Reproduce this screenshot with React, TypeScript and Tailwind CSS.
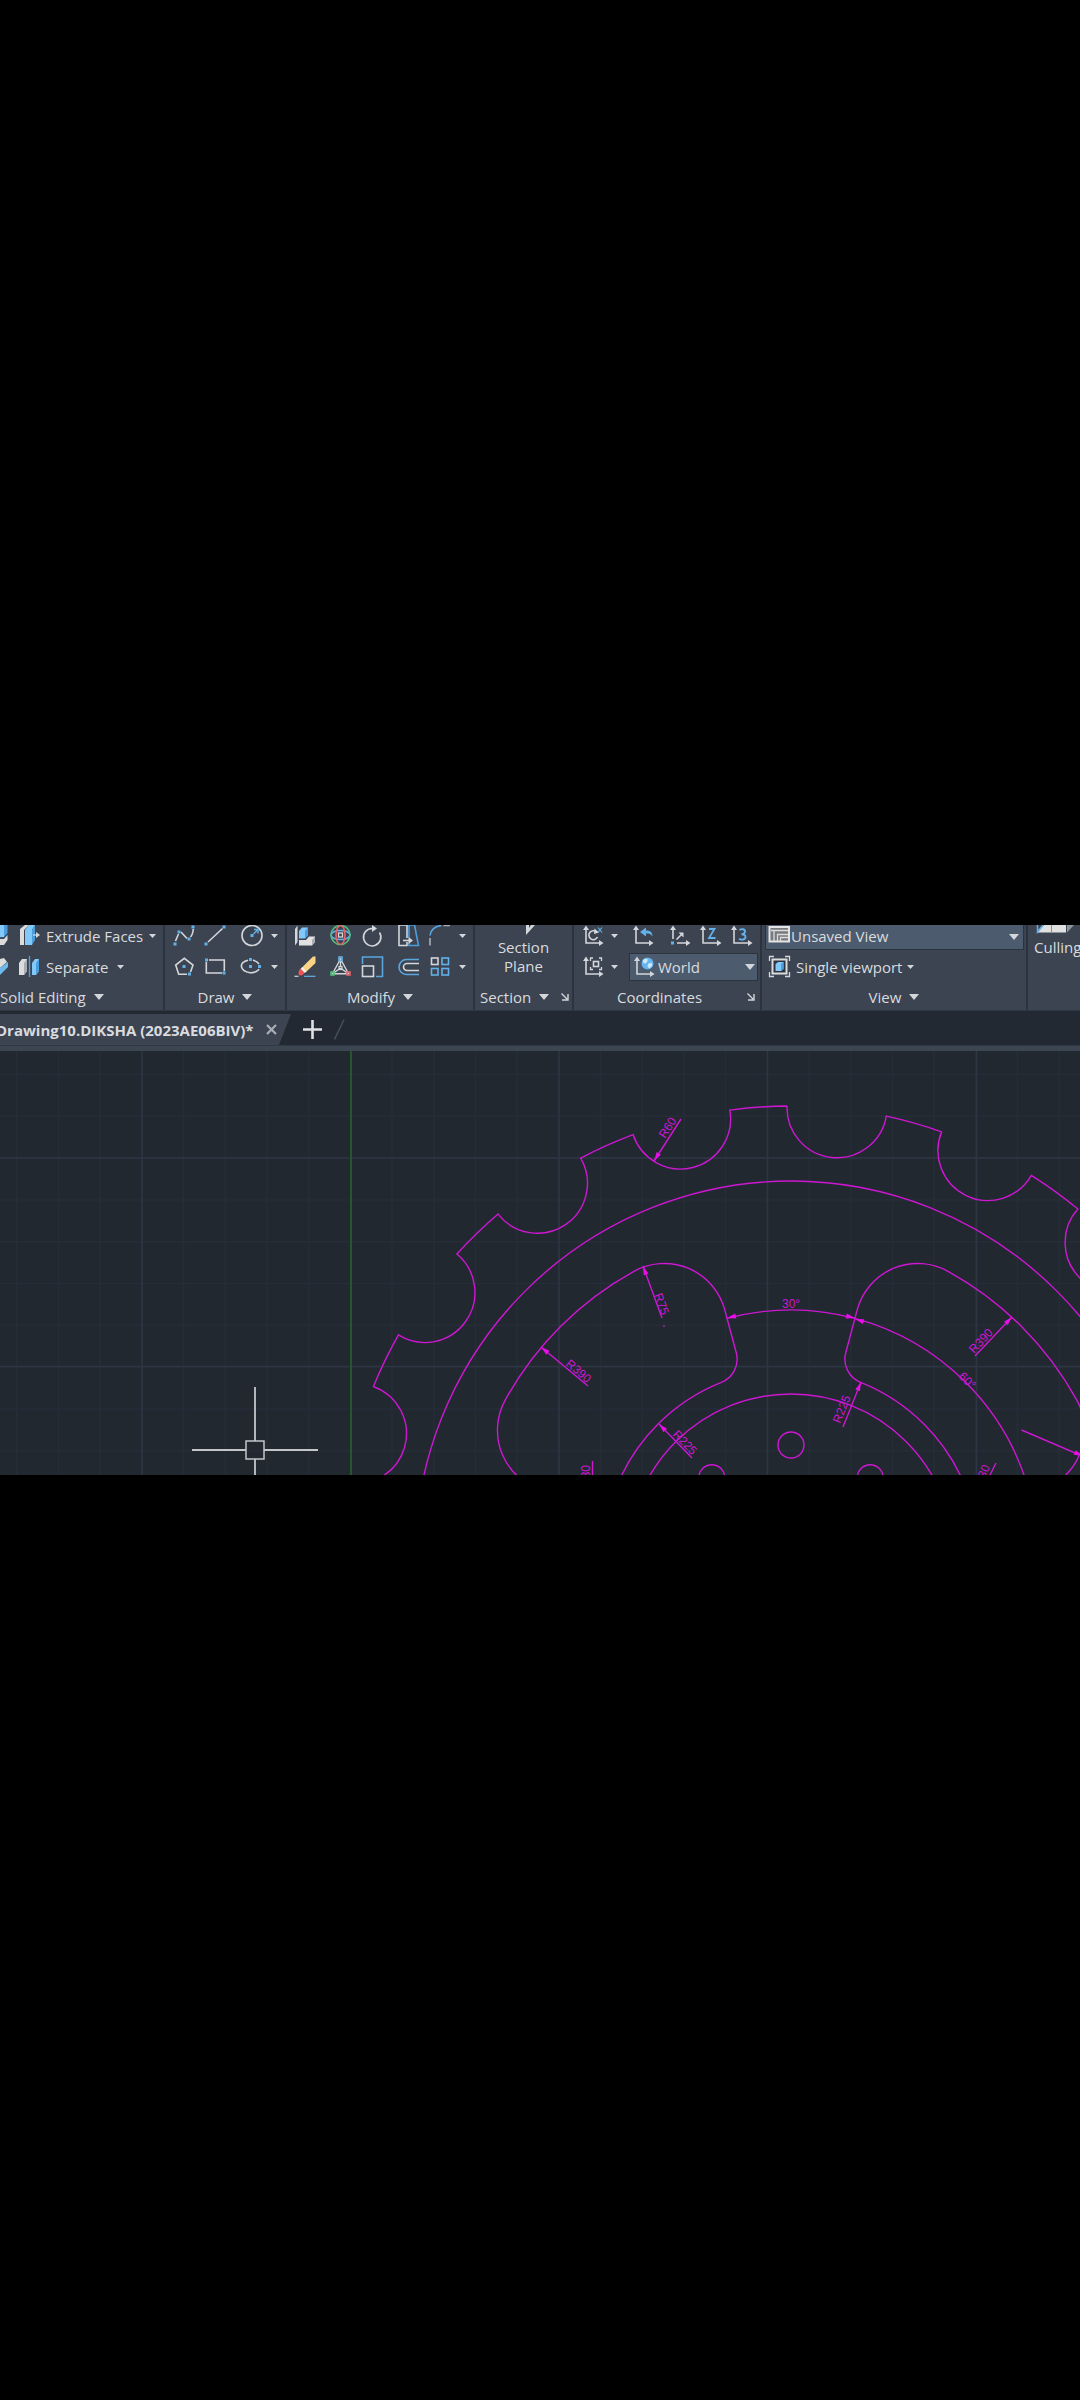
import type { ReactNode } from "react";

const W = "#d3d6da";
const B = "#63b1e8";

function Icon({ children, w = 24 }: { children: ReactNode; w?: number }) {
  return (
    <svg
      width={w}
      height={24}
      viewBox={`0 0 ${w} 24`}
      fill="none"
      stroke={W}
      strokeWidth={1.6}
      className="block shrink-0"
      aria-hidden="true"
    >
      {children}
    </svg>
  );
}

function Dot({ x, y, c = B }: { x: number; y: number; c?: string }) {
  return <rect x={x - 1.5} y={y - 1.5} width={3} height={3} fill={c} stroke="none" />;
}

function Tool({ label, children }: { label: string; children: ReactNode }) {
  return (
    <button type="button" aria-label={label} className="block h-6 shrink-0">
      {children}
    </button>
  );
}

function SmallCaret() {
  return (
    <svg width={7} height={4} viewBox="0 0 7 4" className="block shrink-0" aria-hidden="true">
      <path d="M0 0h7L3.500 4z" fill={W} />
    </svg>
  );
}

function Caret() {
  return (
    <svg width={10} height={6} viewBox="0 0 10 6" className="block shrink-0" aria-hidden="true">
      <path d="M0 0h10L5 6z" fill={W} />
    </svg>
  );
}

function More({ label }: { label: string }) {
  return (
    <button type="button" aria-label={label} className="flex h-6 w-4 items-center justify-center">
      <SmallCaret />
    </button>
  );
}

function Launcher({ label }: { label: string }) {
  return (
    <button type="button" aria-label={label} className="block">
      <svg width={8} height={8} viewBox="0 0 8 8" fill="none" stroke={W} strokeWidth={1.4}>
        <path d="M0.500 0.500L6 6M7 1v6H1" />
      </svg>
    </button>
  );
}

function Panel({
  width,
  title,
  caret = true,
  launcher = false,
  labelClass = "justify-center",
  children,
}: {
  width: string;
  title: string;
  caret?: boolean;
  launcher?: boolean;
  labelClass?: string;
  children: ReactNode;
}) {
  return (
    <section className={`${width} flex shrink-0 flex-col border-r-2 border-[#2b333f]`} aria-label={title}>
      <div className="h-[62px]">{children}</div>
      <div className={`flex h-[27px] items-center ${labelClass}`}>
        <button type="button" className="flex items-center gap-2">
          {title}
          {caret && <Caret />}
        </button>
        {launcher && <Launcher label={`${title} settings`} />}
      </div>
    </section>
  );
}

const Axes = ({ x = 4 }: { x?: number }) => (
  <>
    <path d={`M${x} 5V19H18`} />
    <path d={`M${x - 3} 6L${x} 1.500L${x + 3} 6zM17 16L21.500 19L17 22z`} fill={W} stroke="none" />
  </>
);

function SolidEditing() {
  return (
    <Panel width="w-[165px]" title="Solid Editing" labelClass="justify-start">
      <div className="flex h-[30px] items-center">
        <Tool label="Union">
          <Icon w={10}>
            <path d="M0 1h7v8l-3 4H0z" fill="#82c8f8" stroke="none" />
            <path d="M4 1h3.500v8L4 13z" fill="#4b9ddb" stroke="none" />
            <path d="M0 15h4l3.500-4v5L4 21H0z" fill="#dcdcdc" stroke="none" />
            <path d="M0 13.500h4l3.500-4" stroke="#2e5f86" strokeWidth={1} />
          </Icon>
        </Tool>
        <button type="button" className="ml-2 flex items-center">
          <Icon>
            <path d="M2 5L7 1h4L6 6v15H2z" fill="#dcdcdc" stroke="none" />
            <path d="M7 6l4-5h6l-3 5v15H7z" fill="#82c8f8" stroke="none" />
            <path d="M14 6l3-5v15l-3 5z" fill="#4b9ddb" stroke="none" />
            <path d="M15 11h5" strokeWidth={1.300} />
            <path d="M18 8l4 3-4 3z" fill={W} stroke="none" />
          </Icon>
          <span className="ml-1">Extrude Faces</span>
        </button>
        <div className="ml-auto mr-[3px]">
          <More label="Face tools" />
        </div>
      </div>
      <div className="mt-px flex h-[30px] items-center">
        <Tool label="Subtract">
          <Icon w={10}>
            <path d="M0 4l4-1 3 4-7 6z" fill="#dcdcdc" stroke="none" />
            <path d="M0 13l8-6v5l-8 8z" fill="#6db9ee" stroke="none" />
          </Icon>
        </Tool>
        <button type="button" className="ml-2 flex items-center">
          <Icon>
            <path d="M1 8l3-4h5v12l-3 4H1z" fill="#dcdcdc" stroke="none" />
            <path d="M6 8l3-4v12l-3 4z" fill="#a9acb1" stroke="none" />
            <path d="M11.500 1v21" stroke="#4b9ddb" strokeWidth={1.400} />
            <path d="M14 8l3-4h4v12l-3 4h-4z" fill="#82c8f8" stroke="none" />
            <path d="M18 8l3-4v12l-3 4z" fill="#4b9ddb" stroke="none" />
          </Icon>
          <span className="ml-1">Separate</span>
        </button>
        <div className="ml-1">
          <More label="Body tools" />
        </div>
      </div>
    </Panel>
  );
}

function Draw() {
  return (
    <Panel width="w-[122px]" title="Draw">
      <div className="ml-[7px] grid h-[30px] grid-cols-[31px_37px_26px_16px] items-center">
        <Tool label="Spline">
          <Icon>
            <path d="M3.500 17L6.500 10M9 8L15 14.500M18.500 13C20.500 11 21 8 21.300 5" />
            <Dot x={3} y={20} />
            <Dot x={7} y={8} />
            <Dot x={17} y={15} />
            <Dot x={21} y={3} />
          </Icon>
        </Tool>
        <Tool label="Line">
          <Icon>
            <path d="M5 18L19.500 4.500" />
            <Dot x={3} y={20} />
            <Dot x={21} y={3} />
          </Icon>
        </Tool>
        <Tool label="Circle">
          <Icon>
            <circle cx={12} cy={11.500} r={10} />
            <path d="M13.500 10L17 6.500M14 5.500h4v4" stroke={B} strokeWidth={1.400} />
            <Dot x={12} y={11.500} />
          </Icon>
        </Tool>
        <More label="Circle options" />
      </div>
      <div className="ml-[7px] mt-px grid h-[30px] grid-cols-[31px_37px_26px_16px] items-center">
        <Tool label="Polygon">
          <Icon>
            <path d="M15 19.300H6.700L3.700 10L12.300 3.300L21 10L18.500 17" />
            <Dot x={12} y={11.500} />
            <Dot x={17.500} y={19} />
          </Icon>
        </Tool>
        <Tool label="Rectangle">
          <Icon>
            <path d="M6 5H21.300V16M19 18H3.300V7" />
            <Dot x={3.500} y={5} />
            <Dot x={21} y={18} />
          </Icon>
        </Tool>
        <Tool label="Ellipse">
          <Icon>
            <path d="M8 5.300C-2 8 0 16 10 17.800C15 17.800 18.500 15.500 19 14M19 9C18 7.500 16 5.800 13 5.300" />
            <Dot x={10.500} y={4.500} />
            <Dot x={10.500} y={11.500} />
            <Dot x={19.500} y={11.500} />
          </Icon>
        </Tool>
        <More label="Ellipse options" />
      </div>
    </Panel>
  );
}

function Modify() {
  return (
    <Panel width="w-[188px]" title="Modify">
      <div className="ml-[6px] grid h-[30px] grid-cols-[36px_32px_36px_31px_26px_16px] items-center">
        <Tool label="Move">
          <Icon>
            <path d="M2 5L4.500 1.500V18L2 21.500z" fill={W} stroke="none" />
            <path d="M6 7L9 3.500h6v8l-3 3H6z" fill="#82c8f8" stroke="none" />
            <path d="M12 7l3-3.500v8l-3 3z" fill="#4b9ddb" stroke="none" />
            <path d="M6 16h7l3-3.500h6V18l-3 3.500H6z" fill="#e2e2e2" stroke="none" />
            <path d="M19 16l3-3.500V18l-3 3.500z" fill="#a9acb1" stroke="none" />
          </Icon>
        </Tool>
        <Tool label="3D Rotate">
          <Icon>
            <ellipse cx={11.500} cy={11} rx={9.500} ry={4.500} stroke={B} />
            <circle cx={11.500} cy={11} r={9.500} stroke="#4fc07a" />
            <ellipse cx={11.500} cy={11} rx={4.500} ry={9.500} stroke="#e4646a" />
            <rect x={9.500} y={9} width={4} height={4} strokeWidth={1.300} />
          </Icon>
        </Tool>
        <Tool label="Rotate">
          <Icon>
            <path d="M18.500 8.500A8.700 8.700 0 1 1 11 4.500" />
            <path d="M11 1L16 4.500L11 8z" fill={W} stroke="none" />
          </Icon>
        </Tool>
        <Tool label="Stretch">
          <Icon>
            <path d="M10 14V1H2V21.500H10V18" />
            <path d="M12 14V1H17.500L21.500 21.500H12V19" stroke="#4b9ddb" />
            <path d="M6 16.500H13" />
            <path d="M11.500 13L16 16.500L11.500 20z" fill={W} stroke="none" />
          </Icon>
        </Tool>
        <Tool label="Fillet">
          <Icon>
            <path d="M2 11.500C2.500 6 7 2 13.500 1.500" stroke="#5aa6de" />
            <path d="M2 14V21.500M15.500 1.500H22" stroke="#a9afb7" />
          </Icon>
        </Tool>
        <More label="Fillet options" />
      </div>
      <div className="ml-[6px] mt-px grid h-[30px] grid-cols-[36px_32px_36px_31px_26px_16px] items-center">
        <Tool label="Erase">
          <Icon>
            <path d="M22.500 1.500V8L12.500 17.500L8.500 13L20 1.500z" fill="#fbd384" stroke="none" />
            <path d="M9.500 12L13.500 16.500L11.500 18L7.500 14z" fill="#f3f3f3" stroke="none" />
            <path d="M7.500 13.500L11.500 18C10 20.500 7 21 6 20C5 18.500 5.500 15.500 7.500 13.500z" fill="#ee5555" stroke="none" />
            <path d="M1.500 21.300H5.500" strokeWidth={1.200} />
            <path d="M11 21.300H22.500" stroke={B} strokeWidth={1.200} />
          </Icon>
        </Tool>
        <Tool label="3D Scale">
          <Icon>
            <path d="M11.500 4L3.500 18.700H19.500zM11.500 4V12M11.500 13L4 18.500M11.500 13L19 18.500" strokeWidth={1.400} />
            <rect x={10} y={2} width={3} height={3.500} stroke={B} />
            <rect x={2} y={17} width={3} height={3} stroke="#4fc07a" />
            <rect x={18} y={17} width={3} height={3} stroke="#e4646a" />
            <rect x={10} y={11.500} width={3} height={3} strokeWidth={1.200} />
          </Icon>
        </Tool>
        <Tool label="Scale">
          <Icon>
            <path d="M1.500 9V2H21.500V21.500H15" stroke="#5aa6de" />
            <rect x={1.500} y={11} width={11} height={10.500} />
          </Icon>
        </Tool>
        <Tool label="Offset">
          <Icon>
            <path d="M22 4.500H9.500a7.500 7.500 0 0 0 0 15H22" stroke="#5aa6de" />
            <path d="M22 8.500H10a3.500 3.500 0 0 0 0 7H22" />
          </Icon>
        </Tool>
        <Tool label="Array">
          <Icon>
            <rect x={3.500} y={3} width={6.500} height={6.500} />
            <g stroke={B}>
              <rect x={14} y={3} width={6.500} height={6.500} />
              <rect x={3.500} y={13.500} width={6.500} height={6.500} />
              <rect x={14} y={13.500} width={6.500} height={6.500} />
            </g>
          </Icon>
        </Tool>
        <More label="Array options" />
      </div>
    </Panel>
  );
}

function SectionPanel() {
  return (
    <Panel width="w-[99px]" title="Section" launcher labelClass="gap-3 pl-[5px]">
      <button type="button" className="flex w-full flex-col items-center pt-1">
        <svg width={12} height={12} viewBox="0 0 12 12" className="ml-3 block" aria-hidden="true">
          <path d="M2 0H11L2 10z" fill={W} />
          <path d="M5 0H7L5 3z" fill="#3c4452" />
        </svg>
        <span className="mt-px leading-[19px]">
          Section
          <br />
          Plane
        </span>
      </button>
    </Panel>
  );
}

function Coordinates() {
  return (
    <Panel
      width="w-[188px]"
      title="Coordinates"
      caret={false}
      launcher
      labelClass="justify-between pl-[43px] pr-[5px]"
    >
      <div className="ml-2 grid h-[30px] grid-cols-[24px_26px_37px_31px_31px_24px] items-center">
        <Tool label="UCS X">
          <Icon>
            <Axes />
            <path d="M15 8.500A4.500 4.500 0 1 0 15.500 13" />
            <path d="M12.500 4.500L17 8.500L12 10z" fill={W} stroke="none" />
            <path d="M16 3.500L20 8.500M20 3.500L16 8.500" stroke={B} strokeWidth={1.200} />
          </Icon>
        </Tool>
        <More label="UCS rotation options" />
        <Tool label="UCS Previous">
          <Icon>
            <Axes />
            <path d="M8 8L14 3.500V6.500C18 6.500 20.500 8 20.500 12.500C19 10 17 9.500 14 9.500V12.500z" fill={B} stroke="none" />
          </Icon>
        </Tool>
        <Tool label="UCS Origin">
          <Icon>
            <path d="M4 5V15M8 19H18" />
            <path d="M1 6L4 1.500L7 6zM17 16L21.500 19L17 22z" fill={W} stroke="none" />
            <path d="M7.500 15.500L13 10" />
            <path d="M9.500 8.500H14.500V13.500z" fill={W} stroke="none" />
            <Dot x={3.500} y={19} />
          </Icon>
        </Tool>
        <Tool label="UCS Z axis vector">
          <Icon>
            <Axes x={3} />
            <path d="M9 5H14.500L9 14H15.500" stroke={B} strokeWidth={1.800} />
          </Icon>
        </Tool>
        <Tool label="UCS 3 point">
          <Icon>
            <Axes x={3} />
            <path
              d="M8.500 6C10 4.800 14 4.600 14 7.500C14 9.500 12.500 10.200 10.500 10.200C13 10.200 14.500 11 14.500 13C14.500 16 10 16.200 8 14.800"
              stroke={B}
              strokeWidth={1.900}
            />
          </Icon>
        </Tool>
      </div>
      <div className="ml-2 mt-px flex h-[30px] items-center">
        <Tool label="UCS View">
          <Icon>
            <Axes />
            <rect x={11.500} y={6.500} width={5} height={5} />
            <path d="M8.500 6V3H11M17 3H19.500V6M19.500 12V14.500H17M11 14.500H8.500V12" strokeWidth={1.300} />
          </Icon>
        </Tool>
        <More label="UCS View options" />
        <div className="relative ml-[7px] h-7 w-[129px] border border-[#2b333f] bg-[#4d5b6e]">
          <div className="pointer-events-none absolute left-[3px] top-px">
            <Icon>
              <Axes />
              <circle cx={14.500} cy={8.500} r={6} fill="#64b5f0" stroke="none" />
              <path d="M9.500 6L12 3.500L15 4.500L13.500 8L11 8.500zM15 9L18 7.500L19.500 10L16.500 13.500L14.500 11.500z" fill="#cdeafd" stroke="none" />
            </Icon>
          </div>
          <select
            aria-label="Coordinate system"
            className="block h-full w-full appearance-none bg-transparent pl-7 outline-none"
          >
            <option>World</option>
          </select>
          <div className="pointer-events-none absolute right-[2px] top-[10px]">
            <Caret />
          </div>
        </div>
      </div>
    </Panel>
  );
}

function View() {
  return (
    <Panel width="w-[266px]" title="View" labelClass="justify-center">
      <div className="relative ml-[3px] mr-[2px] h-[29px] border border-[#2b333f] bg-[#4d5b6e]">
        <div className="pointer-events-none absolute left-[2px] top-[2px]">
          <Icon>
            <rect x={1.500} y={3} width={19.500} height={14.500} fill="#777a7e" stroke="#e4e4e4" strokeWidth={2} />
            <path d="M3 6.500H20M6 7V17M9.500 17V10.500H20M12.500 17V13.500H20" stroke="#dcdcdc" strokeWidth={1.300} />
          </Icon>
        </div>
        <select
          aria-label="Saved view"
          className="block h-full w-full appearance-none bg-transparent pl-[25px] outline-none"
        >
          <option>Unsaved View</option>
        </select>
        <div className="pointer-events-none absolute right-1 top-[12px]">
          <Caret />
        </div>
      </div>
      <div className="ml-[6px] mt-[2px] flex h-[30px] items-center">
        <button type="button" className="flex items-center gap-1">
          <Icon>
            <path d="M1.500 6V1.500H6M17 1.500H21.500V6M21.500 17V21.500H17M6 21.500H1.500V17" strokeWidth={1.300} />
            <rect x={4.500} y={4.500} width={14} height={14} fill="#2b333f" stroke="#dcdcdc" strokeWidth={2} />
            <path d="M7.500 9L10 7H15.500V14L13 16H7.500z" fill="#82c8f8" stroke="none" />
            <path d="M13 9L15.500 7V14L13 16z" fill="#4b9ddb" stroke="none" />
          </Icon>
          Single viewport
        </button>
        <More label="Viewport options" />
      </div>
    </Panel>
  );
}

function Ribbon() {
  return (
    <div className="h-[86px] overflow-hidden border-b border-[#2f3845] bg-[#3c4452]">
      <div className="-mt-1 flex">
        <SolidEditing />
        <Draw />
        <Modify />
        <SectionPanel />
        <Coordinates />
        <View />
        <button type="button" className="flex shrink-0 flex-col items-start pl-[6px] pt-1">
          <svg width={40} height={12} viewBox="0 0 40 12" className="ml-[2px] block" aria-hidden="true">
            <path d="M2 0H30V7.500H2z" fill="#e0e0e0" />
            <path d="M15.500 0V7.500" stroke="#8c9096" />
            <path d="M1 0H8L2 7H1z" fill="#3c4452" />
            <path d="M1.500 0V7L7 0" fill="none" stroke={B} strokeWidth={1.500} />
            <path d="M31 0H38L31 7.500z" fill="#8f949b" />
          </svg>
          <span className="mt-px leading-[19px]">Culling</span>
        </button>
      </div>
    </div>
  );
}

function FileTabs() {
  return (
    <div className="flex h-[34px] items-center bg-[#222933]">
      <div className="flex h-[31px] w-[291px] shrink-0 items-center self-end bg-[#3c4452] [clip-path:polygon(0_0,100%_0,279px_100%,0_100%)]">
        <a href="#drawing" className="-ml-1 w-[258px] whitespace-nowrap font-bold">
          Drawing10.DIKSHA (2023AE06BIV)*
        </a>
        <button type="button" aria-label="Close drawing" className="ml-3">
          <svg width={11} height={11} viewBox="0 0 11 11" stroke="#a9aeb6" strokeWidth={2.200} className="block">
            <path d="M1 1L10 10M10 1L1 10" />
          </svg>
        </button>
      </div>
      <button type="button" aria-label="New drawing" className="ml-3 mt-[3px]">
        <svg width={19} height={19} viewBox="0 0 19 19" stroke="#dfe1e3" strokeWidth={2.600} className="block">
          <path d="M0 9.500H19M9.500 0V19" />
        </svg>
      </button>
      <svg width={11} height={21} viewBox="0 0 11 21" stroke="#474f5c" strokeWidth={1.500} className="ml-3 mt-[3px] block" aria-hidden="true">
        <path d="M0.500 20.500L10 0.500" />
      </svg>
    </div>
  );
}

// Model geometry, in canvas units around the hub of the wheel.
const CX = 791;
const CY = 506;
const RIM = 451;
const NOTCH = 50;

function polar(r: number, deg: number): [number, number] {
  const a = (deg * Math.PI) / 180;
  return [CX + r * Math.sin(a), CY - r * Math.cos(a)];
}

const pt = (p: [number, number]) => `${p[0].toFixed(2)} ${p[1].toFixed(2)}`;

function rimPath() {
  const half = 6.35;
  let d = "";
  for (let i = 0; i < 18; i++) {
    const a = 5.85 + i * 20;
    d += `${i ? "L" : "M"}${pt(polar(RIM, a - half))}`;
    d += `A${NOTCH} ${NOTCH} 0 0 0 ${pt(polar(RIM, a + half))}`;
    d += `A${RIM} ${RIM} 0 0 1 ${pt(polar(RIM, a + 20 - half))}`;
  }
  return d;
}

function pocketPath(s: 1 | -1) {
  const f = s === 1 ? 1 : 0;
  const g = 1 - f;
  const p = (r: number, a: number) => pt(polar(r, s * a));
  return (
    `M${p(211.5, 15)}L${p(255.8, 15)}A62.6 62.6 0 0 ${f} ${p(326, 28.8)}` +
    `A326 326 0 0 ${f} ${p(326, 61.2)}A62.6 62.6 0 0 ${f} ${p(255.8, 75)}L${p(211.5, 75)}` +
    `A25 25 0 0 ${f} ${p(188, 68.26)}A188 188 0 0 ${g} ${p(188, 21.74)}A25 25 0 0 ${f} ${p(211.5, 15)}Z`
  );
}

// Leader: arrow tip, tail end, then the label's baseline start and angle.
const leaders = [
  { tip: [654, 110], tail: [681, 68], at: [665, 88], rot: -57, text: "R60" },
  { tip: [643, 215], tail: [662, 267], at: [654, 244], rot: 70, text: "R75" },
  { tip: [541, 296], tail: [588, 335], at: [565, 314], rot: 40, text: "R390" },
  { tip: [659, 373], tail: [692, 407], at: [672, 384], rot: 46, text: "R225" },
  { tip: [1012, 266], tail: [975, 305], at: [974, 303], rot: -47, text: "R390" },
  { tip: [861, 331], tail: [843, 376], at: [840, 373], rot: -68, text: "R225" },
];

function Arrow({ x, y, deg }: { x: number; y: number; deg: number }) {
  return <path d="M0 0L-9 2.500V-2.500z" fill="#e80feb" stroke="none" transform={`translate(${x} ${y}) rotate(${deg})`} />;
}

function Canvas() {
  const minorX = Array.from({ length: 27 }, (_, i) => 17 + i * 41.7 - 0.3);
  const minorY = Array.from({ length: 10 }, (_, i) => 23.5 + i * 41.8);
  return (
    <svg
      id="drawing"
      viewBox="0 0 1080 424"
      className="block h-auto w-full bg-[#212830]"
      fill="none"
      role="img"
      aria-label="Wheel drawing"
    >
      <g stroke="#262d38" strokeWidth={1.500}>
        {minorX.map((x) => (
          <path key={x} d={`M${x} 0V424`} />
        ))}
        {minorY.map((y) => (
          <path key={y} d={`M0 ${y}H1080`} />
        ))}
      </g>
      <g stroke="#2e3644" strokeWidth={1.500}>
        <path d="M142 0V424M559 0V424M767.500 0V424M976.500 0V424M0 107H1080M0 315.500H1080" />
      </g>
      <path d="M351 0V424" stroke="#24582c" strokeWidth={2} />

      <g stroke="#cd17d3" strokeWidth={1.400}>
        <path d={rimPath()} />
        <circle cx={CX} cy={CY} r={376} />
        <circle cx={CX} cy={CY} r={163} />
        <path d={pocketPath(1)} />
        <path d={pocketPath(-1)} />
        <path d={`M${pt(polar(247, -15))}A247 247 0 0 1 ${pt(polar(247, 15))}A247 247 0 0 1 ${pt(polar(247, 75))}`} />
        {[-45, 0, 45].map((a) => {
          const [x, y] = polar(112, a);
          return <circle key={a} cx={x} cy={y} r={13} />;
        })}
        {leaders.map((l) => (
          <path key={`${l.tip}`} d={`M${l.tip}L${l.tail}`} />
        ))}
        <path d="M1021.500 379L1080 404M592.500 410V424M996 412L990 424" />
        <path d="M664 274.500v1.500" />
      </g>
      {leaders.map((l) => (
        <Arrow
          key={`${l.tip}`}
          x={l.tip[0]}
          y={l.tip[1]}
          deg={(Math.atan2(l.tip[1] - l.tail[1], l.tip[0] - l.tail[0]) * 180) / Math.PI}
        />
      ))}
      <Arrow x={727} y={267} deg={167} />
      <Arrow x={855} y={267} deg={13} />
      <Arrow x={855} y={268} deg={197} />
      <Arrow x={1083} y={405} deg={23} />
      <g fill="#cd17d3" fontFamily="'Liberation Sans', Arial, sans-serif" fontSize={12}>
        {leaders.map((l) => (
          <text key={`${l.tip}`} transform={`translate(${l.at[0]} ${l.at[1]}) rotate(${l.rot})`}>
            {l.text}
          </text>
        ))}
        <text x={782} y={257}>30°</text>
        <text transform="translate(958 326) rotate(45)">60°</text>
        <text transform="translate(590 436) rotate(-90)">R30</text>
        <text transform="translate(981 436) rotate(-65)">R30</text>
      </g>

      <g stroke="#c3c6c9" strokeWidth={1.800}>
        <path d="M255 336V390M255 408V424M192 399H246M264 399H318" />
        <rect x={246} y={390} width={18} height={18} strokeWidth={1.500} />
      </g>
    </svg>
  );
}

export default function App() {
  return (
    <main className="flex min-h-screen w-full flex-col justify-center overflow-hidden bg-black">
      <div className="overflow-hidden whitespace-nowrap font-['Open_Sans','Noto_Sans',sans-serif] text-[15px] leading-5 text-[#d9dbdf]">
        <Ribbon />
        <FileTabs />
        <div className="h-[6px] border-t border-[#2f3845] bg-[#3c4653]" />
        <Canvas />
      </div>
    </main>
  );
}
